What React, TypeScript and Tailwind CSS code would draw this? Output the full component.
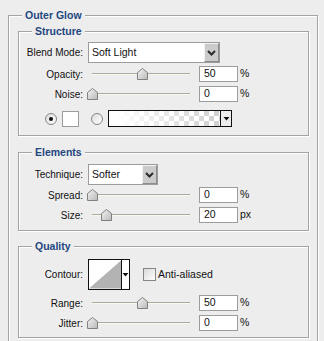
import React from 'react';

const Thumb = ({ left }: { left: number }) => (
  <svg className="absolute top-[2px]" style={{ left }} width="11" height="12" viewBox="0 0 11 12">
    <defs>
      <linearGradient id="thumbFill" x1="0" y1="0" x2="1" y2="1">
        <stop offset="0" stopColor="#f4f4f4" />
        <stop offset="1" stopColor="#b9b9b9" />
      </linearGradient>
    </defs>
    <path d="M5.5 0.5 L10.5 4.5 V11.5 H0.5 V4.5 Z" fill="url(#thumbFill)" stroke="#808080" />
  </svg>
);

function Slider({ thumb }: { thumb: number }) {
  // thumb = centre x on the page, slider spans x 87..194
  return (
    <div className="relative ml-[4px] h-full w-[107px]">
      <div className="absolute left-[5px] right-[4px] top-[7px] h-[1px] bg-[#ababab]" />
      <div className="absolute left-[5px] right-[4px] top-[8px] h-[1px] bg-[#faf7e6]" />
      <Thumb left={thumb - 87 - 5} />
    </div>
  );
}

function Label({ children }: { children: React.ReactNode }) {
  return <span className="w-[64px] shrink-0 text-right text-[10px] text-[#111]">{children}</span>;
}

function SliderRow({ label, value, unit, thumb }: { label: string; value: string; unit: string; thumb: number }) {
  return (
    <div className="flex h-[16px] items-center">
      <Label>{label}</Label>
      <Slider thumb={thumb} />
      <div className="ml-[5px] flex h-[16px] w-[39px] items-center border border-[#9c9c9c] bg-white pl-[4px] text-[10.5px] text-[#111]">
        {value}
      </div>
      <span className="ml-[2px] text-[10.5px] text-[#111]">{unit}</span>
    </div>
  );
}

const Chevron = () => (
  <svg width="9" height="6" viewBox="0 0 9 6">
    <polyline points="1,1 4.5,4.5 8,1" fill="none" stroke="#2a2a2a" strokeWidth="2" />
  </svg>
);

const DownTri = () => (
  <svg width="7" height="4" viewBox="0 0 7 4">
    <path d="M0.5 0 H6.5 L3.5 3.5 Z" fill="#111" />
  </svg>
);

function Select({ label, value, width }: { label: string; value: string; width: string }) {
  return (
    <div className="flex h-[21px] items-center">
      <Label>{label}</Label>
      <div className={`ml-[5px] flex h-[21px] items-stretch border border-[#9c9c9c] bg-white ${width}`}>
        <span className="flex flex-1 items-center pl-[3px] text-[10.5px] text-[#111]">{value}</span>
        <span className="flex w-[15px] items-center justify-center border border-t-[#f2f2f2] border-l-[#f2f2f2] border-r-[#8c8c8c] border-b-[#8c8c8c] bg-[#cbcbcb]">
          <Chevron />
        </span>
      </div>
    </div>
  );
}

function GroupBox({ title, className, children }: { title: string; className: string; children: React.ReactNode }) {
  return (
    <div className={`relative border border-[#a3a3a3] shadow-[inset_1px_1px_0_#fff,1px_1px_0_#fff] ${className}`}>
      <span className="absolute left-[13px] top-[-8px] bg-[#ededed] px-[3px] text-[10.5px] font-bold leading-[14px] text-[#1f4780]">
        {title}
      </span>
      {children}
    </div>
  );
}

const Radio = ({ checked }: { checked?: boolean }) => (
  <span className="flex h-[12px] w-[12px] shrink-0 items-center justify-center rounded-full border border-[#858585] bg-[linear-gradient(135deg,#dcdcdc,#ffffff)]">
    {checked && <span className="h-[4px] w-[4px] rounded-full bg-[#111]" />}
  </span>
);

export default function App() {
  return (
    <div className="h-[341px] w-[324px] overflow-hidden bg-[#ededed] pl-[8px] pt-[15px] font-['Liberation_Sans',Arial,sans-serif]">
      <GroupBox title="Outer Glow" className="h-[340px] w-[310px] pl-[9px] pt-[15px]">
        <GroupBox title="Structure" className="w-[291px] pb-[8px] pt-[10px]">
          <Select label="Blend Mode:" value="Soft Light" width="w-[132px]" />
          <div className="mt-[3px]">
            <SliderRow label="Opacity:" value="50" unit="%" thumb={142} />
          </div>
          <div className="mt-[4px]">
            <SliderRow label="Noise:" value="0" unit="%" thumb={92} />
          </div>
          <div className="mt-[8px] flex h-[17px] items-center">
            <span className="ml-[26px]"><Radio checked /></span>
            <span className="ml-[5px] h-[16px] w-[17px] border border-[#9c9c9c] bg-white" />
            <span className="ml-[12px]"><Radio /></span>
            <div className="ml-[5px] flex h-[17px] w-[124px] border border-[#111]">
              <span className="flex-1 [background:linear-gradient(to_right,#fff_5%,rgba(255,255,255,0)_95%),repeating-conic-gradient(#d2d2d2_0%_25%,#fff_0%_50%)_0_0/10px_10px]" />
              <span className="flex w-[11px] items-center justify-center border-l border-[#111] bg-[#ededed]">
                <DownTri />
              </span>
            </div>
          </div>
        </GroupBox>

        <GroupBox title="Elements" className="mt-[16px] w-[291px] pb-[7px] pt-[11px]">
          <Select label="Technique:" value="Softer" width="w-[70px]" />
          <div className="mt-[2px]">
            <SliderRow label="Spread:" value="0" unit="%" thumb={92} />
          </div>
          <div className="mt-[4px]">
            <SliderRow label="Size:" value="20" unit="px" thumb={106} />
          </div>
        </GroupBox>

        <GroupBox title="Quality" className="mt-[15px] w-[291px] pb-[6px] pt-[12px]">
          <div className="flex h-[31px] items-center">
            <Label>Contour:</Label>
            <div className="ml-[5px] flex h-[31px] w-[42px] border border-[#111] bg-white">
              <svg width="33" height="29" viewBox="0 0 33 29" className="block">
                <rect width="33" height="29" fill="#fff" />
                <path d="M0 29 L33 0 V29 Z" fill="#b3b3b3" />
              </svg>
              <span className="flex flex-1 items-center justify-center border-l border-[#111]">
                <DownTri />
              </span>
            </div>
            <span className="ml-[13px] h-[13px] w-[13px] border border-[#858585] bg-[linear-gradient(135deg,#d8d8d8,#ffffff)]" />
            <span className="ml-[2px] text-[10.5px] text-[#111]">Anti-aliased</span>
          </div>
          <div className="mt-[5px]">
            <SliderRow label="Range:" value="50" unit="%" thumb={142} />
          </div>
          <div className="mt-[4px]">
            <SliderRow label="Jitter:" value="0" unit="%" thumb={92} />
          </div>
        </GroupBox>
      </GroupBox>
    </div>
  );
}
